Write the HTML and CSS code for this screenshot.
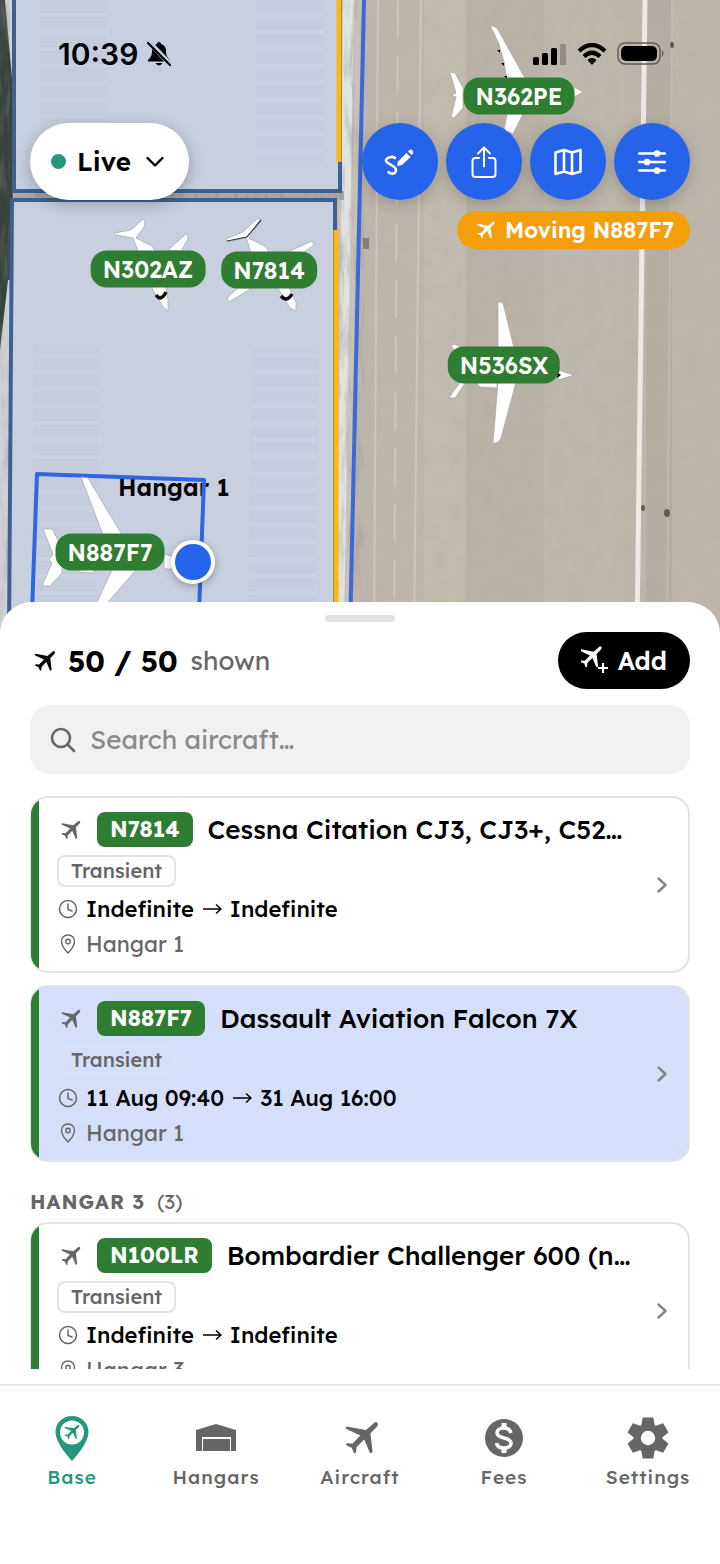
FILE: index.html
```html
<!DOCTYPE html>
<html lang="en">
<head>
  <meta charset="UTF-8">
  <meta name="viewport" content="width=device-width, initial-scale=1.0">
  <title>Base</title>
  <link rel="stylesheet" href="styles.css">
</head>
<body>
  <!-- shared icons -->
  <svg class="sprite" aria-hidden="true">
    <symbol id="plane" viewBox="1 0 24 24">
      <path d="M5.300 6.200L15 8L19 4.500Q20 3.600 20.700 4.400Q21.400 5.200 20.600 6.200L17.200 9.700L18.300 18.900Q17.600 20 16.900 19.300L14.100 12.700L10.300 16.500L10 19.300Q9.400 20 8.800 19.300L7.900 16.900L5.300 15.800Q4.700 15 5.500 14.600L8.300 14.800L12.200 10.800L5.200 7.500Q4.500 6.800 5.300 6.200z" fill="currentColor"/>
    </symbol>
    <symbol id="clock" viewBox="0 0 20 20">
      <circle cx="10" cy="10" r="8.500" fill="none" stroke="currentColor" stroke-width="1.500"/>
      <path d="M10 5v5.500l4 1.500" fill="none" stroke="currentColor" stroke-width="1.500" stroke-linecap="round"/>
    </symbol>
    <symbol id="pin" viewBox="0 0 20 20">
      <path d="M10 1C6.200 1 3.500 3.700 3.500 7.300C3.500 11.500 7.500 16.500 10 19C12.500 16.500 16.500 11.500 16.500 7.300C16.500 3.700 13.800 1 10 1z" fill="none" stroke="currentColor" stroke-width="1.400"/>
      <circle cx="10" cy="7.500" r="2.200" fill="none" stroke="currentColor" stroke-width="1.400"/>
    </symbol>
    <symbol id="chevron" viewBox="0 0 12 18">
      <path d="M2.500 2.500L9.500 9L2.500 15.500" fill="none" stroke="currentColor" stroke-width="2.400" stroke-linecap="round" stroke-linejoin="round"/>
    </symbol>
  </svg>

  <div class="app">
    <div class="map">
      <svg class="map-canvas" viewBox="0 0 720 634" preserveAspectRatio="xMidYMin slice" aria-hidden="true">
        <defs>
          <pattern id="bays" width="68" height="17" patternUnits="userSpaceOnUse">
            <rect width="68" height="13" fill="#bfc6d8"/>
            <rect y="13" width="68" height="4" fill="#cdd4e3"/>
          </pattern>
          <filter id="grain" x="0" y="0" width="100%" height="100%">
            <feTurbulence type="fractalNoise" baseFrequency="0.06 0.05" numOctaves="5" seed="4"/>
            <feColorMatrix values="0 0 0 0 0.4  0 0 0 0 0.37  0 0 0 0 0.33  0.9 0 0 0 -0.34"/>
          </filter>
          <filter id="rough" x="0" y="0" width="100%" height="100%">
            <feTurbulence type="fractalNoise" baseFrequency="0.2 0.025" numOctaves="3" seed="8"/>
            <feColorMatrix values="0 0 0 0 0.3  0 0 0 0 0.29  0 0 0 0 0.33  1.8 0 0 0 -0.8"/>
          </filter>
        </defs>

        <!-- apron -->
        <rect width="720" height="634" fill="#beb6ab"/>
        <rect x="424" width="42" height="634" fill="#c1bbad"/>
        <rect x="466" width="78" height="634" fill="#bbb2a7"/>
        <rect x="544" width="80" height="634" fill="#beb7ab"/>
        <rect x="646" width="26" height="634" fill="#b6aea3"/>
        <rect x="350" width="370" height="634" filter="url(#grain)" opacity="0.350"/>
        <g stroke="#cdc6b6" stroke-width="2" fill="none">
          <path d="M378 0L374 634"/>
          <path d="M398 0L394 634" stroke-dasharray="38 18"/>
          <path d="M421 0L414 634"/>
          <path d="M672 0L667 634" opacity="0.500"/>
        </g>
        <path d="M645 0L637 634" stroke="#ece9e6" stroke-width="5"/>
        <g fill="#65594e">
          <ellipse cx="672" cy="45" rx="2" ry="3"/>
          <ellipse cx="643" cy="508" rx="2" ry="3"/>
          <ellipse cx="667" cy="513" rx="3" ry="4"/>
          <rect x="363" y="238" width="6" height="11" opacity="0.600"/>
        </g>

        <!-- gravel strips either side of the hangars -->
        <path d="M340 0H364L350 634H336z" fill="#c9c2ba"/>
        <path d="M343 0H354L344 634H337z" fill="#e2e2e1"/>
        <path d="M340 0H364L350 634H336z" filter="url(#rough)" opacity="0.600"/>
        <path d="M0 0H14L10 634H0z" fill="#36443f"/>
        <path d="M5 0H14V100z" fill="#ced2d6"/>
        <path d="M0 350L8 280H12V634H0z" fill="#ced0d8"/>
        <rect width="10" height="634" filter="url(#rough)" opacity="0.500"/>
        <rect x="14" y="191" width="330" height="9" fill="#a9a8aa"/>
        <rect x="14" y="191" width="330" height="9" filter="url(#rough)"/>

        <!-- hangars -->
        <path d="M14 -6H340V191H14z" fill="#c8cfdf" stroke="#405f91" stroke-width="4"/>
        <path d="M12 200H335V640H9z" fill="#c8cfdf" stroke="#405f91" stroke-width="4"/>
        <path d="M339 0V162M336 230V634" stroke="#fbb80d" stroke-width="5"/>
        <g fill="url(#bays)" opacity="0.300">
          <rect x="40" y="0" width="67" height="122"/>
          <rect x="256" y="0" width="67" height="162"/>
          <path d="M34 346H100L96 634H30z"/>
          <path d="M252 349H319L314 634H247z"/>
        </g>
        <text class="hangar-name" x="118" y="496">Hangar 1</text>
        <path d="M364 0L350 634" stroke="#3c68d8" stroke-width="4"/>
        <path d="M37 474L204 480L198 640L31 640z" fill="none" stroke="#2d66de" stroke-width="4" stroke-linejoin="round"/>

        <!-- aircraft -->
        <g fill="#fff" stroke="#a4a4aa" stroke-width="0.700">
          <path d="M114 233L131 230L143 219L145 221L144 227L136 238L152 246L161 262L168 299V311L163 307L153 290L133 238L116 235z"/>
          <path d="M168 250L187 233L188 239L181 251z"/>
          <path d="M226 239L243 232L258 218L261 220L249 238L266 247L285 280L296 302V311L290 308L279 290L250 250L246 237L228 242z"/>
          <path d="M288 252L312 241L314 245L300 255zM227 298L229 302L252 288L238 288z"/>
          <path d="M490 25L497 28L526 80H507L504 62L499 44zM450 72L455 73L463 88V108L454 118L451 117L456 97L451 95L456 93zM574 87L583 92L574 97zM507 114H523L513 134L504 130z"/>
          <path d="M498 303Q499 301 503 303L514 348H498zM498 382H516L501 438Q498 444 493 443zM476 382H497V388L480 387zM451 346Q455 342 461 348L456 352zM460 382L449 398H455L466 382zM558 370L574 375L558 380z"/>
          <path d="M81 477L88 478L122 535H103zM43 529L52 529L62 547V573L50 586H42L52 563L49 560L53 554zM112 570H136L108 602L92 634H82zM164 554L172 556V569H164zM76 569H94V573L80 572z"/>
        </g>
        <path d="M227 241L247 237L261 220" fill="none" stroke="#333" stroke-width="1.200"/>
        <path d="M156 295Q161 302 166 292M281 296Q287 303 292 294" fill="none" stroke="#111" stroke-width="3.500"/>
        <path d="M557 372L561 375L557 378zM497 50h3v3zM501 63h3v3zM504 76h3v3z"/>
      </svg>

      <span class="tail-pin pin-n362pe">N362PE</span>
      <span class="tail-pin pin-n302az">N302AZ</span>
      <span class="tail-pin pin-n7814">N7814</span>
      <span class="tail-pin pin-n536sx">N536SX</span>
      <span class="tail-pin pin-n887f7">N887F7</span>
      <button class="rotate-handle" aria-label="Rotate aircraft"></button>

      <div class="overlay">
        <div class="status-bar">
          <span class="time">10:39</span>
          <svg width="26" height="26" viewBox="0 0 26 26">
            <path d="M13 1C11.800 1 11 1.800 11 3C7.500 4 6 6.500 6 10C6 15 4.500 16.500 2 19V20.500H24V19C21.500 16.500 20 15 20 10C20 6.500 18.500 4 15 3C15 1.800 14.200 1 13 1zM9.500 22Q13 27 16.500 22z"/>
            <path d="M3 1L25 24" stroke="#c8cfdf" stroke-width="5"/>
            <path d="M2 2L24 24" stroke="#000" stroke-width="2.200" stroke-linecap="round"/>
          </svg>
          <span class="spacer"></span>
          <svg width="34" height="22" viewBox="0 0 34 22">
            <rect x="0" y="14" width="6" height="8" rx="1.500"/>
            <rect x="9" y="10" width="6" height="12" rx="1.500"/>
            <rect x="18" y="5" width="6" height="17" rx="1.500"/>
            <rect x="27" y="1" width="6" height="21" rx="1.500" fill="#928b83"/>
          </svg>
          <svg width="30" height="22" viewBox="0 0 30 22">
            <path d="M2 8Q15 -4 28 8M7 13.500Q15 6 23 13.500" fill="none" stroke="#000" stroke-width="4.200"/>
            <path d="M10.500 17Q15 13 19.500 17L15 22z"/>
          </svg>
          <svg width="48" height="24" viewBox="0 0 48 24">
            <rect x="1" y="1" width="42" height="21" rx="7" fill="none" stroke="#625b55" stroke-width="1.500"/>
            <rect x="4" y="4" width="36" height="15" rx="5"/>
            <path d="M45 8Q48 11.500 45 15z" fill="#625b55"/>
          </svg>
        </div>

        <div class="toolbar">
          <button class="live-button">
            <span class="live-dot"></span>
            Live
            <svg width="18" height="12" viewBox="0 0 18 12"><path d="M1.500 2L9 9.500L16.500 2" fill="none" stroke="#000" stroke-width="2.400" stroke-linecap="round" stroke-linejoin="round"/></svg>
          </button>
          <div class="tools">
            <button class="tool-button" aria-label="Draw">
              <svg width="32" height="32" viewBox="0 0 32 32">
                <path d="M11 12C8 9.500 2 12 2 14.500C2 18 12 19.500 12 24C12 29 6 28 4.500 26" fill="none" stroke="#fff" stroke-width="2.600" stroke-linecap="round"/>
                <path d="M13 20L14 15.500L22.500 7L26.500 11L18 19z" fill="#fff"/>
                <path d="M24 5.500L25.500 4Q27 3 28.500 4.500Q30 6.300 28.800 7.800L27.500 9z" fill="#fff"/>
              </svg>
            </button>
            <button class="tool-button" aria-label="Share">
              <svg width="32" height="32" viewBox="0 0 32 32" fill="none" stroke="#fff" stroke-width="2" stroke-linecap="round" stroke-linejoin="round">
                <path d="M11 12H7.500Q4.500 12 4.500 15V28Q4.500 31 7.500 31H24.500Q27.500 31 27.500 28V15Q27.500 12 24.500 12H21M16 20.500V1.500M10 7.500L16 1.500L22 7.500"/>
              </svg>
            </button>
            <button class="tool-button" aria-label="Map type">
              <svg width="32" height="32" viewBox="0 0 32 32" fill="none" stroke="#fff" stroke-width="2.600" stroke-linejoin="round">
                <path d="M3.500 6.500L12 4L20 6.500L28.500 4V25.500L20 28L12 25.500L3.500 28zM12 4V25.500M20 6.500V28"/>
              </svg>
            </button>
            <button class="tool-button" aria-label="Filters">
              <svg width="32" height="32" viewBox="0 0 32 32" stroke="#fff" stroke-width="2.300" stroke-linecap="round" fill="#fff">
                <path d="M3 7.500H29M3 16H29M3 24.500H29"/>
                <circle cx="21" cy="7.500" r="2.200"/><circle cx="11" cy="16" r="2.200"/><circle cx="21" cy="24.500" r="2.200"/>
              </svg>
            </button>
          </div>
        </div>

        <div class="moving-banner">
          <svg width="26" height="26"><use href="#plane"/></svg>
          Moving N887F7
        </div>
      </div>
    </div>

    <main class="sheet">
      <div class="grabber"></div>
      <header class="sheet-header">
        <svg width="30" height="30"><use href="#plane"/></svg>
        <strong class="count">50 / 50</strong>
        <span class="count-label">shown</span>
        <button class="add-button">
          <svg width="28" height="30" viewBox="0 0 28 30">
            <use href="#plane" x="-6" y="-5" width="32" height="32"/>
            <path d="M22 17V27M17 22H27" stroke="#000" stroke-width="5"/>
            <path d="M22 17V27M17 22H27" stroke="#fff" stroke-width="2.200"/>
          </svg>
          Add
        </button>
      </header>

      <label class="search">
        <svg width="26" height="26" viewBox="0 0 26 26" fill="none" stroke="#666" stroke-width="2.600" stroke-linecap="round">
          <circle cx="11" cy="11" r="9"/><path d="M18 18L24 24"/>
        </svg>
        <input type="text" placeholder="Search aircraft…" aria-label="Search aircraft">
      </label>

      <div class="list">
        <a class="card" href="#n7814">
          <div class="card-body">
            <div class="card-title">
              <svg width="28" height="28"><use href="#plane"/></svg>
              <span class="tail">N7814</span>
              <span class="model">Cessna Citation CJ3, CJ3+, C52…</span>
            </div>
            <span class="tag">Transient</span>
            <div class="card-row dates">
              <svg width="20" height="20"><use href="#clock"/></svg>
              Indefinite
              <svg class="arrow" width="20" height="12" viewBox="0 0 20 12"><path d="M1 6H19M14 1.500L19 6L14 10.500"/></svg>
              Indefinite
            </div>
            <div class="card-row">
              <svg width="20" height="20"><use href="#pin"/></svg>
              Hangar 1
            </div>
          </div>
          <svg class="card-chevron" width="12" height="18"><use href="#chevron"/></svg>
        </a>

        <a class="card selected" href="#n887f7">
          <div class="card-body">
            <div class="card-title">
              <svg width="28" height="28"><use href="#plane"/></svg>
              <span class="tail">N887F7</span>
              <span class="model">Dassault Aviation Falcon 7X</span>
            </div>
            <span class="tag">Transient</span>
            <div class="card-row dates">
              <svg width="20" height="20"><use href="#clock"/></svg>
              11 Aug 09:40
              <svg class="arrow" width="20" height="12" viewBox="0 0 20 12"><path d="M1 6H19M14 1.500L19 6L14 10.500"/></svg>
              31 Aug 16:00
            </div>
            <div class="card-row">
              <svg width="20" height="20"><use href="#pin"/></svg>
              Hangar 1
            </div>
          </div>
          <svg class="card-chevron" width="12" height="18"><use href="#chevron"/></svg>
        </a>

        <h2 class="group-title">HANGAR 3 <span class="group-count">(3)</span></h2>

        <a class="card" href="#n100lr">
          <div class="card-body">
            <div class="card-title">
              <svg width="28" height="28"><use href="#plane"/></svg>
              <span class="tail">N100LR</span>
              <span class="model">Bombardier Challenger 600 (n…</span>
            </div>
            <span class="tag">Transient</span>
            <div class="card-row dates">
              <svg width="20" height="20"><use href="#clock"/></svg>
              Indefinite
              <svg class="arrow" width="20" height="12" viewBox="0 0 20 12"><path d="M1 6H19M14 1.500L19 6L14 10.500"/></svg>
              Indefinite
            </div>
            <div class="card-row">
              <svg width="20" height="20"><use href="#pin"/></svg>
              Hangar 3
            </div>
          </div>
          <svg class="card-chevron" width="12" height="18"><use href="#chevron"/></svg>
        </a>
      </div>
    </main>

    <nav class="tabs">
      <a class="tab active" href="#base">
        <svg width="48" height="48" viewBox="0 0 48 48">
          <path d="M24 2C14.500 2 7.500 9 7.500 18C7.500 28 18 40 24 47C30 40 40.500 28 40.500 18C40.500 9 33.500 2 24 2z" fill="currentColor"/>
          <circle cx="24" cy="18.500" r="12" fill="#fff"/>
          <use href="#plane" x="13" y="7" width="22" height="22"/>
        </svg>
        Base
      </a>
      <a class="tab" href="#hangars">
        <svg width="48" height="48" viewBox="0 0 48 48" fill="currentColor">
          <path d="M4 16L24 10L44 16V37H39V23H10V37H4z"/>
          <path d="M11 25H38V37H11z"/>
        </svg>
        Hangars
      </a>
      <a class="tab" href="#aircraft">
        <svg width="48" height="48" viewBox="0 0 48 48"><use href="#plane" x="2" y="0" width="48" height="48"/></svg>
        Aircraft
      </a>
      <a class="tab" href="#fees">
        <svg width="48" height="48" viewBox="0 0 48 48">
          <circle cx="24" cy="24" r="19" fill="currentColor"/>
          <path d="M31 19C30 15.500 27.500 14 24 14C19.500 14 17 16 17 18.800C17 22 20 23 24 24C28 25 31 26 31 29.300C31 32.300 28 34 24 34C20 34 17 32.500 16.500 29" fill="none" stroke="#fff" stroke-width="3.600"/>
          <path d="M24 9V14M24 34V39" stroke="#fff" stroke-width="5"/>
        </svg>
        Fees
      </a>
      <a class="tab" href="#settings">
        <svg width="48" height="48" viewBox="0 0 48 48" fill="currentColor">
          <g stroke="currentColor" stroke-width="2" stroke-linejoin="round">
            <path id="tooth" d="M19.500 4.500H28.500L30 14H18z"/>
            <use href="#tooth" transform="rotate(60 24 24)"/>
            <use href="#tooth" transform="rotate(120 24 24)"/>
            <use href="#tooth" transform="rotate(180 24 24)"/>
            <use href="#tooth" transform="rotate(240 24 24)"/>
            <use href="#tooth" transform="rotate(300 24 24)"/>
          </g>
          <circle cx="24" cy="24" r="14.500"/>
          <circle cx="24" cy="24" r="7.200" fill="#fff"/>
        </svg>
        Settings
      </a>
    </nav>
  </div>
</body>
</html>
```
FILE: styles.css
```css
* {
  box-sizing: border-box;
}
body {
  font-family: Lexend, Inter, sans-serif;
  font-feature-settings: "cv11";
  margin: 0;
  color: #000;
  background: #fff;
}
button, input {
  font: inherit;
  font-feature-settings: inherit;
  border: none;
  padding: 0;
}
button {
  cursor: pointer;
}
a {
  color: inherit;
  text-decoration: none;
}
svg {
  flex-shrink: 0;
}
.sprite {
  display: none;
}
.app {
  display: flex;
  flex-direction: column;
  height: 100vh;
}

/* map, runs on behind the rounded top of the sheet */
.map {
  position: relative;
  flex: 1;
  min-height: 0;
  margin-bottom: -32px;
  overflow: hidden;
}
.map-canvas {
  position: absolute;
  top: 0;
  left: 0;
  width: 100%;
  height: 100%;
}
.hangar-name {
  font-size: 24px;
  font-weight: 600;
}
.tail-pin {
  position: absolute;
  transform: translate(-50%, -50%);
  padding: 0 12px;
  border-radius: 16px;
  background: #2f7d32;
  color: #fff;
  font-size: 23px;
  font-weight: 600;
  line-height: 37px;
}
.pin-n362pe {
  left: 519px;
  top: 96px;
}
.pin-n302az {
  left: 148px;
  top: 269px;
}
.pin-n7814 {
  left: 269px;
  top: 270px;
}
.pin-n536sx {
  left: 504px;
  top: 365px;
}
.pin-n887f7 {
  left: 110px;
  top: 552px;
}
.rotate-handle {
  position: absolute;
  left: 171px;
  top: 540px;
  width: 44px;
  height: 44px;
  border: 4px solid #fff;
  border-radius: 50%;
  background: #2563eb;
  box-shadow: 0 2px 8px rgba(0, 0, 0, 0.3);
}
.overlay {
  position: relative;
  display: flex;
  flex-direction: column;
  padding: 36px 30px 0;
}
.status-bar {
  display: flex;
  align-items: center;
  gap: 8px;
  height: 36px;
  padding: 0 25px 0 28px;
}
.status-bar svg {
  margin-left: 2px;
}
.time {
  font-family: Inter, sans-serif;
  font-size: 30px;
  font-weight: 600;
}
.time + svg {
  margin-left: 0;
}
.spacer {
  flex: 1;
}
.toolbar {
  display: flex;
  justify-content: space-between;
  margin-top: 51px;
}
.live-button {
  display: flex;
  align-items: center;
  gap: 11px;
  height: 77px;
  padding: 0 25px 0 21px;
  border-radius: 39px;
  background: #fff;
  color: #000;
  font-size: 26px;
  font-weight: 600;
  box-shadow: 0 4px 16px rgba(0, 0, 0, 0.25);
}
.live-button svg {
  margin-left: 4px;
}
.live-dot {
  width: 15px;
  height: 15px;
  border-radius: 50%;
  background: #26967f;
}
.tools {
  display: flex;
  gap: 8px;
}
.tool-button {
  display: flex;
  align-items: center;
  justify-content: center;
  width: 76px;
  height: 77px;
  border-radius: 50%;
  background: #2563eb;
  box-shadow: 0 4px 16px rgba(0, 0, 0, 0.2);
}
.moving-banner {
  display: flex;
  align-items: center;
  align-self: flex-end;
  gap: 6px;
  margin-top: 11px;
  padding: 0 16px;
  border-radius: 19px;
  background: #f59e0b;
  color: #fff;
  font-size: 22px;
  font-weight: 600;
  line-height: 38px;
}

/* bottom sheet */
.sheet {
  position: relative;
  display: flex;
  flex-direction: column;
  flex-shrink: 0;
  height: 50%;
  padding: 13px 30px 15px;
  border-radius: 32px 32px 0 0;
  background: #fff;
}
.grabber {
  width: 70px;
  height: 7px;
  margin: 0 auto;
  border-radius: 4px;
  background: #e2e2e2;
}
.sheet-header {
  display: flex;
  align-items: center;
  margin-top: 10px;
}
.count {
  margin: 0 13px 0 8px;
  font-size: 29px;
  font-weight: 700;
}
.count-label {
  color: #666;
  font-size: 26px;
}
.add-button {
  display: flex;
  align-items: center;
  gap: 9px;
  height: 57px;
  margin-left: auto;
  padding: 0 23px;
  border-radius: 29px;
  background: #000;
  color: #fff;
  font-size: 25px;
  font-weight: 600;
}
.search {
  display: flex;
  align-items: center;
  gap: 14px;
  height: 69px;
  margin-top: 16px;
  padding: 0 20px;
  border-radius: 20px;
  background: #f1f1f1;
}
.search input {
  flex: 1;
  min-width: 0;
  background: none;
  font-size: 26px;
  outline: none;
}
.search input::placeholder {
  color: #8a8a8a;
  opacity: 1;
}
.list {
  flex: 1;
  min-height: 0;
  margin-top: 22px;
  overflow-y: auto;
  scrollbar-width: none;
}
.card {
  display: flex;
  align-items: center;
  margin-bottom: 12px;
  padding: 0 20px 0 26px;
  border: 2px solid #e3e3e3;
  border-left-width: 1px;
  border-radius: 18px;
  background: linear-gradient(to right, #2f7d32 8px, #fff 8px);
}
.card.selected {
  background: linear-gradient(to right, #2f7d32 8px, #d5defa 8px);
}
.card-body {
  flex: 1;
  min-width: 0;
  padding: 14px 0 10px;
}
.card-title {
  display: flex;
  align-items: center;
  height: 35px;
  margin-bottom: 8px;
}
.card-title svg {
  color: #666;
}
.tail {
  margin: 0 15px 0 12px;
  padding: 0 13px;
  border-radius: 8px;
  background: #2f7d32;
  color: #fff;
  font-size: 22px;
  font-weight: 700;
  line-height: 35px;
}
.model {
  overflow: hidden;
  font-size: 26px;
  font-weight: 500;
  white-space: nowrap;
}
.tag {
  display: block;
  width: fit-content;
  padding: 0 12px;
  border: 2px solid #e3e3e3;
  border-radius: 8px;
  color: #666;
  font-size: 20px;
  font-weight: 500;
  line-height: 28px;
}
.selected .tag {
  border-color: #dce2f6;
}
.card-row {
  display: flex;
  align-items: center;
  gap: 8px;
  height: 35px;
  padding-left: 1px;
  color: #666;
  font-size: 22px;
}
.dates {
  margin-top: 4px;
  color: #000;
  font-weight: 500;
}
.dates svg {
  color: #666;
}
.arrow path {
  fill: none;
  stroke: #000;
  stroke-width: 1.5;
}
.card-chevron {
  color: #858585;
}
.group-title {
  display: flex;
  gap: 12px;
  margin: 0;
  padding: 16px 0 8px;
  color: #666;
  font-size: 20px;
  font-weight: 700;
  letter-spacing: 1px;
  line-height: 24px;
}
.group-count {
  font-weight: 400;
  letter-spacing: 0;
}

/* tab bar */
.tabs {
  display: flex;
  flex-shrink: 0;
  height: 180px;
  padding-top: 28px;
  border-top: 2px solid #e9e9e9;
  background: #fff;
}
.tab {
  display: flex;
  flex: 1;
  flex-direction: column;
  align-items: center;
  gap: 2px;
  color: #666;
  font-size: 19px;
  font-weight: 500;
  letter-spacing: 1px;
  line-height: 26px;
}
.tab.active {
  color: #26967f;
}
```
